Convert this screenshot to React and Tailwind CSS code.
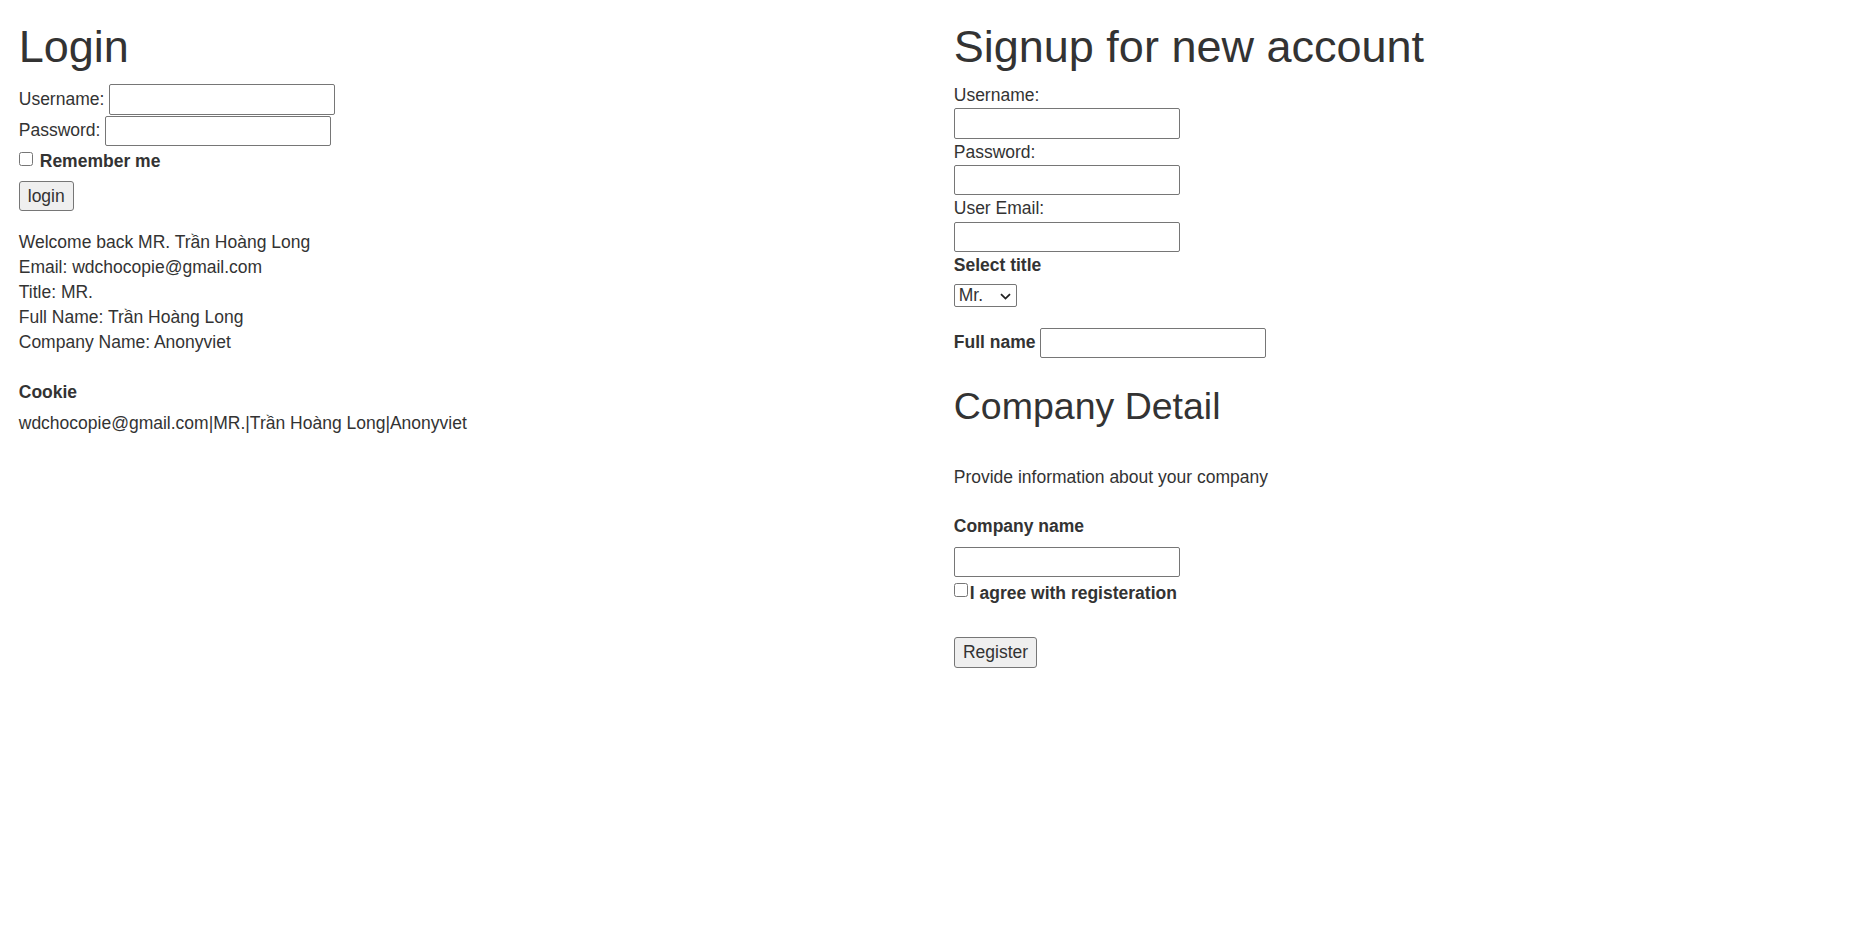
import { useState } from "react";

const field = "block border border-[#767676] rounded-[2px] bg-white";

export default function App() {
  const [title, setTitle] = useState("Mr.");

  return (
    <div className="min-h-[935px] bg-white text-[#333] text-[17.5px] leading-[25px] font-['Liberation_Sans',Arial,sans-serif] grid grid-cols-2">
      {/* login column */}
      <div className="pl-[18.75px]">
        <h1 className="text-[45px] leading-[49.5px] font-normal mt-[22px]">Login</h1>
        <div className="flex items-center h-[31px] mt-[12px]">
          <span>Username:</span>
          <input type="text" className={`${field} ml-[4.5px] w-[226px] h-[31px]`} />
        </div>
        <div className="flex items-center h-[30px] mt-[1px]">
          <span>Password:</span>
          <input type="password" className={`${field} ml-[4.5px] w-[226px] h-[30px]`} />
        </div>
        <label className="flex items-start h-[25px] mt-[3px] font-bold">
          <input type="checkbox" className="m-0 mt-[3.5px] w-[14px] h-[14px]" />
          <span className="ml-[7px]">Remember me</span>
        </label>
        <button className="mt-[7.5px] h-[30px] w-[55px] bg-[#efefef] border border-[#767676] rounded-[3px] flex items-center justify-center">
          login
        </button>
        <div className="mt-[19px]">
          <div>Welcome back MR. Trần Hoàng Long</div>
          <div>Email: wdchocopie@gmail.com</div>
          <div>Title: MR.</div>
          <div>Full Name: Trần Hoàng Long</div>
          <div>Company Name: Anonyviet</div>
        </div>
        <div className="mt-[25px] font-bold">Cookie</div>
        <div className="mt-[5.6px]">wdchocopie@gmail.com|MR.|Trần Hoàng Long|Anonyviet</div>
      </div>

      {/* signup column */}
      <div className="pl-[18.75px]">
        <h1 className="text-[45px] leading-[49.5px] font-normal mt-[22px]">Signup for new account</h1>
        <div className="mt-[10.5px] leading-[27.4px]">Username:</div>
        <input type="text" className={`${field} -mt-[1.1px] w-[226px] h-[30.7px]`} />
        <div className="leading-[27.4px]">Password:</div>
        <input type="password" className={`${field} -mt-[1.1px] w-[226px] h-[30px]`} />
        <div className="leading-[27.4px]">User Email:</div>
        <input type="email" className={`${field} -mt-[1.1px] w-[226px] h-[30.7px]`} />
        <div className="font-bold leading-[27.4px]">Select title</div>
        <div className="relative mt-[4.6px] w-[63px] h-[23px]">
          <select
            value={title}
            onChange={(e) => setTitle(e.target.value)}
            className="block appearance-none w-full h-full pl-[4px] text-[17.5px] leading-[21px] border border-[#767676] rounded-[2px] bg-white"
          >
            <option>Mr.</option>
            <option>Mrs.</option>
            <option>Ms.</option>
          </select>
          <svg
            className="absolute right-[6px] top-[8.5px] pointer-events-none"
            width="11"
            height="7"
            viewBox="0 0 11 7"
            fill="none"
          >
            <path d="M1 1.2 5.5 5.6 10 1.2" stroke="#222" strokeWidth="1.8" />
          </svg>
        </div>
        <div className="flex items-center h-[30px] mt-[20.4px]">
          <span className="font-bold">Full name</span>
          <input type="text" className={`${field} ml-[4.5px] w-[226px] h-[30px]`} />
        </div>
        <h2 className="text-[37.5px] leading-[41.25px] font-normal mt-[28.6px]">Company Detail</h2>
        <p className="mt-[37.75px]">Provide information about your company</p>
        <div className="mt-[23.8px] font-bold">Company name</div>
        <input type="text" className={`${field} mt-[7.6px] w-[226px] h-[30.3px]`} />
        <label className="flex items-start h-[25px] mt-[4px] font-bold">
          <input type="checkbox" className="m-0 mt-[2.4px] ml-[0.5px] w-[14px] h-[14px]" />
          <span className="ml-[1.5px]">I agree with registeration</span>
        </label>
        <button className="mt-[31.3px] h-[31px] w-[83.5px] bg-[#efefef] border border-[#767676] rounded-[3px] flex items-center justify-center">
          Register
        </button>
      </div>
    </div>
  );
}
